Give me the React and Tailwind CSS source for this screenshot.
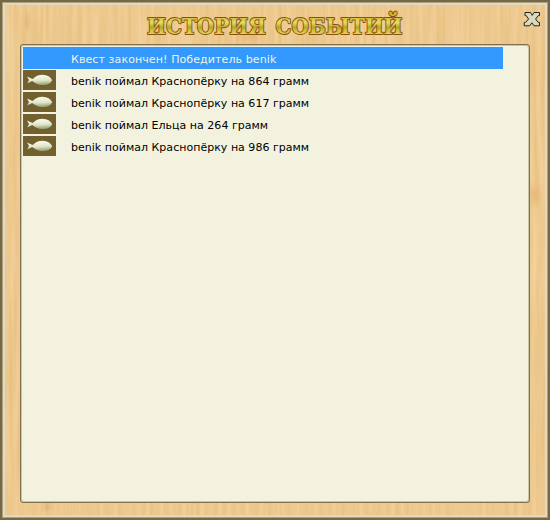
import React from 'react';

const events = [
  { id: 1, type: 'quest', text: 'Квест закончен! Победитель benik' },
  { id: 2, type: 'fish', text: 'benik поймал Краснопёрку на 864 грамм' },
  { id: 3, type: 'fish', text: 'benik поймал Краснопёрку на 617 грамм' },
  { id: 4, type: 'fish', text: 'benik поймал Ельца на 264 грамм' },
  { id: 5, type: 'fish', text: 'benik поймал Краснопёрку на 986 грамм' },
];

const WoodTexture = () => (
  <svg className="absolute inset-0 h-full w-full" aria-hidden="true">
    <defs>
      <filter id="grain" x="0" y="0" width="100%" height="100%" colorInterpolationFilters="sRGB">
        <feTurbulence type="fractalNoise" baseFrequency="0.22 0.01" numOctaves="3" seed="8" />
        <feColorMatrix values="0.06 0 0 0 0.9  0.1 0 0 0 0.738  0.16 0 0 0 0.48  0 0 0 0 1" />
      </filter>
      <radialGradient id="knot">
        <stop offset="0" stopColor="#d18a3c" stopOpacity="0.25" />
        <stop offset="1" stopColor="#d18a3c" stopOpacity="0" />
      </radialGradient>
    </defs>
    <rect width="100%" height="100%" filter="url(#grain)" />
    <ellipse cx="22" cy="16" rx="4" ry="12" fill="url(#knot)" />
    <ellipse cx="245" cy="32" rx="16" ry="8" fill="url(#knot)" />
    <ellipse cx="530" cy="190" rx="8" ry="14" fill="url(#knot)" />
    <ellipse cx="42" cy="502" rx="7" ry="6" fill="url(#knot)" />
  </svg>
);

const Title = () => (
  <svg width="264" height="32" viewBox="0 0 264 32" className="block overflow-visible">
    <defs>
      <linearGradient id="gold" gradientUnits="userSpaceOnUse" x1="0" y1="9" x2="0" y2="28">
        <stop offset="0" stopColor="#c9b832" />
        <stop offset="0.35" stopColor="#e6dc60" />
        <stop offset="0.6" stopColor="#b5a528" />
        <stop offset="0.85" stopColor="#dbcf4c" />
      </linearGradient>
    </defs>
    <g
      className="font-['DejaVu_Serif','Liberation_Serif',serif] text-[23px] font-bold"
      fill="url(#gold)"
      stroke="#8a5011"
      strokeWidth="2"
      strokeLinejoin="round"
      paintOrder="stroke"
    >
      <text x="4" y="27" textLength="119" lengthAdjust="spacingAndGlyphs">ИСТОРИЯ</text>
      <text x="132.5" y="27" textLength="127" lengthAdjust="spacingAndGlyphs">СОБЫТИЙ</text>
    </g>
  </svg>
);

const CloseIcon = () => (
  <svg width="18" height="17" viewBox="0 0 18 17" className="block">
    <path
      d="M2 1.5H7.5L9.2 4.4L11 1.5H16.5V4.6H15.2L12.6 8L15.2 11.4H16.5V14.8H11L8.9 11.8L6.7 14.8H1.2V11.4H2.6L5.6 8L3.2 4.6H2Z"
      fill="#d8d9be"
      stroke="#26251d"
      strokeWidth="1"
      strokeLinejoin="miter"
    />
  </svg>
);

const FishIcon = () => (
  <svg width="33" height="20" viewBox="0 0 33 20" className="block">
    <defs>
      <linearGradient id="fish" x1="0" y1="0" x2="0.15" y2="1">
        <stop offset="0.3" stopColor="#f1f5e2" />
        <stop offset="0.65" stopColor="#dfe4c8" />
        <stop offset="1" stopColor="#9fa77a" />
      </linearGradient>
    </defs>
    <rect width="33" height="20" fill="#72602f" />
    <path
      d="M4 6.6L9.6 9C12.5 6 15.5 4.8 19.5 4.7C24.5 4.8 27.6 6.7 29.2 10.2C27.6 13.7 23.8 15.2 19 15C15 14.8 12 13.3 9.2 10.9L4.2 13.5L6 10Z"
      fill="url(#fish)"
    />
  </svg>
);

const EventRow = ({ event }) => {
  const isQuest = event.type === 'quest';

  return (
    <li className={`flex h-[22px] w-[480px] items-center ${isQuest ? 'bg-[#3399ff] text-[#f2f2df]' : 'text-black'}`}>
      <div className="w-12 shrink-0">{isQuest ? null : <FishIcon />}</div>
      <span className={`whitespace-nowrap pt-0.5 text-[11px] leading-none ${isQuest ? 'tracking-[0.1px]' : 'tracking-[0.02px]'}`}>
        {event.text}
      </span>
    </li>
  );
};

const App = () => {
  return (
    <div className="h-[520px] w-[550px] overflow-hidden border-2 border-[#776744] bg-[#aaa17f] p-px font-['DejaVu_Sans',Verdana,sans-serif]">
      <div className="relative h-full border-2 border-[#e2d9c0]">
        <WoodTexture />
        <div className="relative flex h-full flex-col px-[15px] pb-[12px]">
          {/* Header */}
          <header className="flex h-[39px] shrink-0 justify-center pt-[2px]">
            <Title />
            <button className="absolute right-[4px] top-[6px]" aria-label="Закрыть">
              <CloseIcon />
            </button>
          </header>

          {/* Event list */}
          <div className="min-h-0 flex-1 rounded-[3px] border border-[#80704f] bg-[#c9c7aa] p-px">
            <ul className="h-full rounded-[2px] bg-[#f3f2df] pl-px pt-px">
              {events.map((event) => (
                <EventRow key={event.id} event={event} />
              ))}
            </ul>
          </div>
        </div>
      </div>
    </div>
  );
};

export default App;
